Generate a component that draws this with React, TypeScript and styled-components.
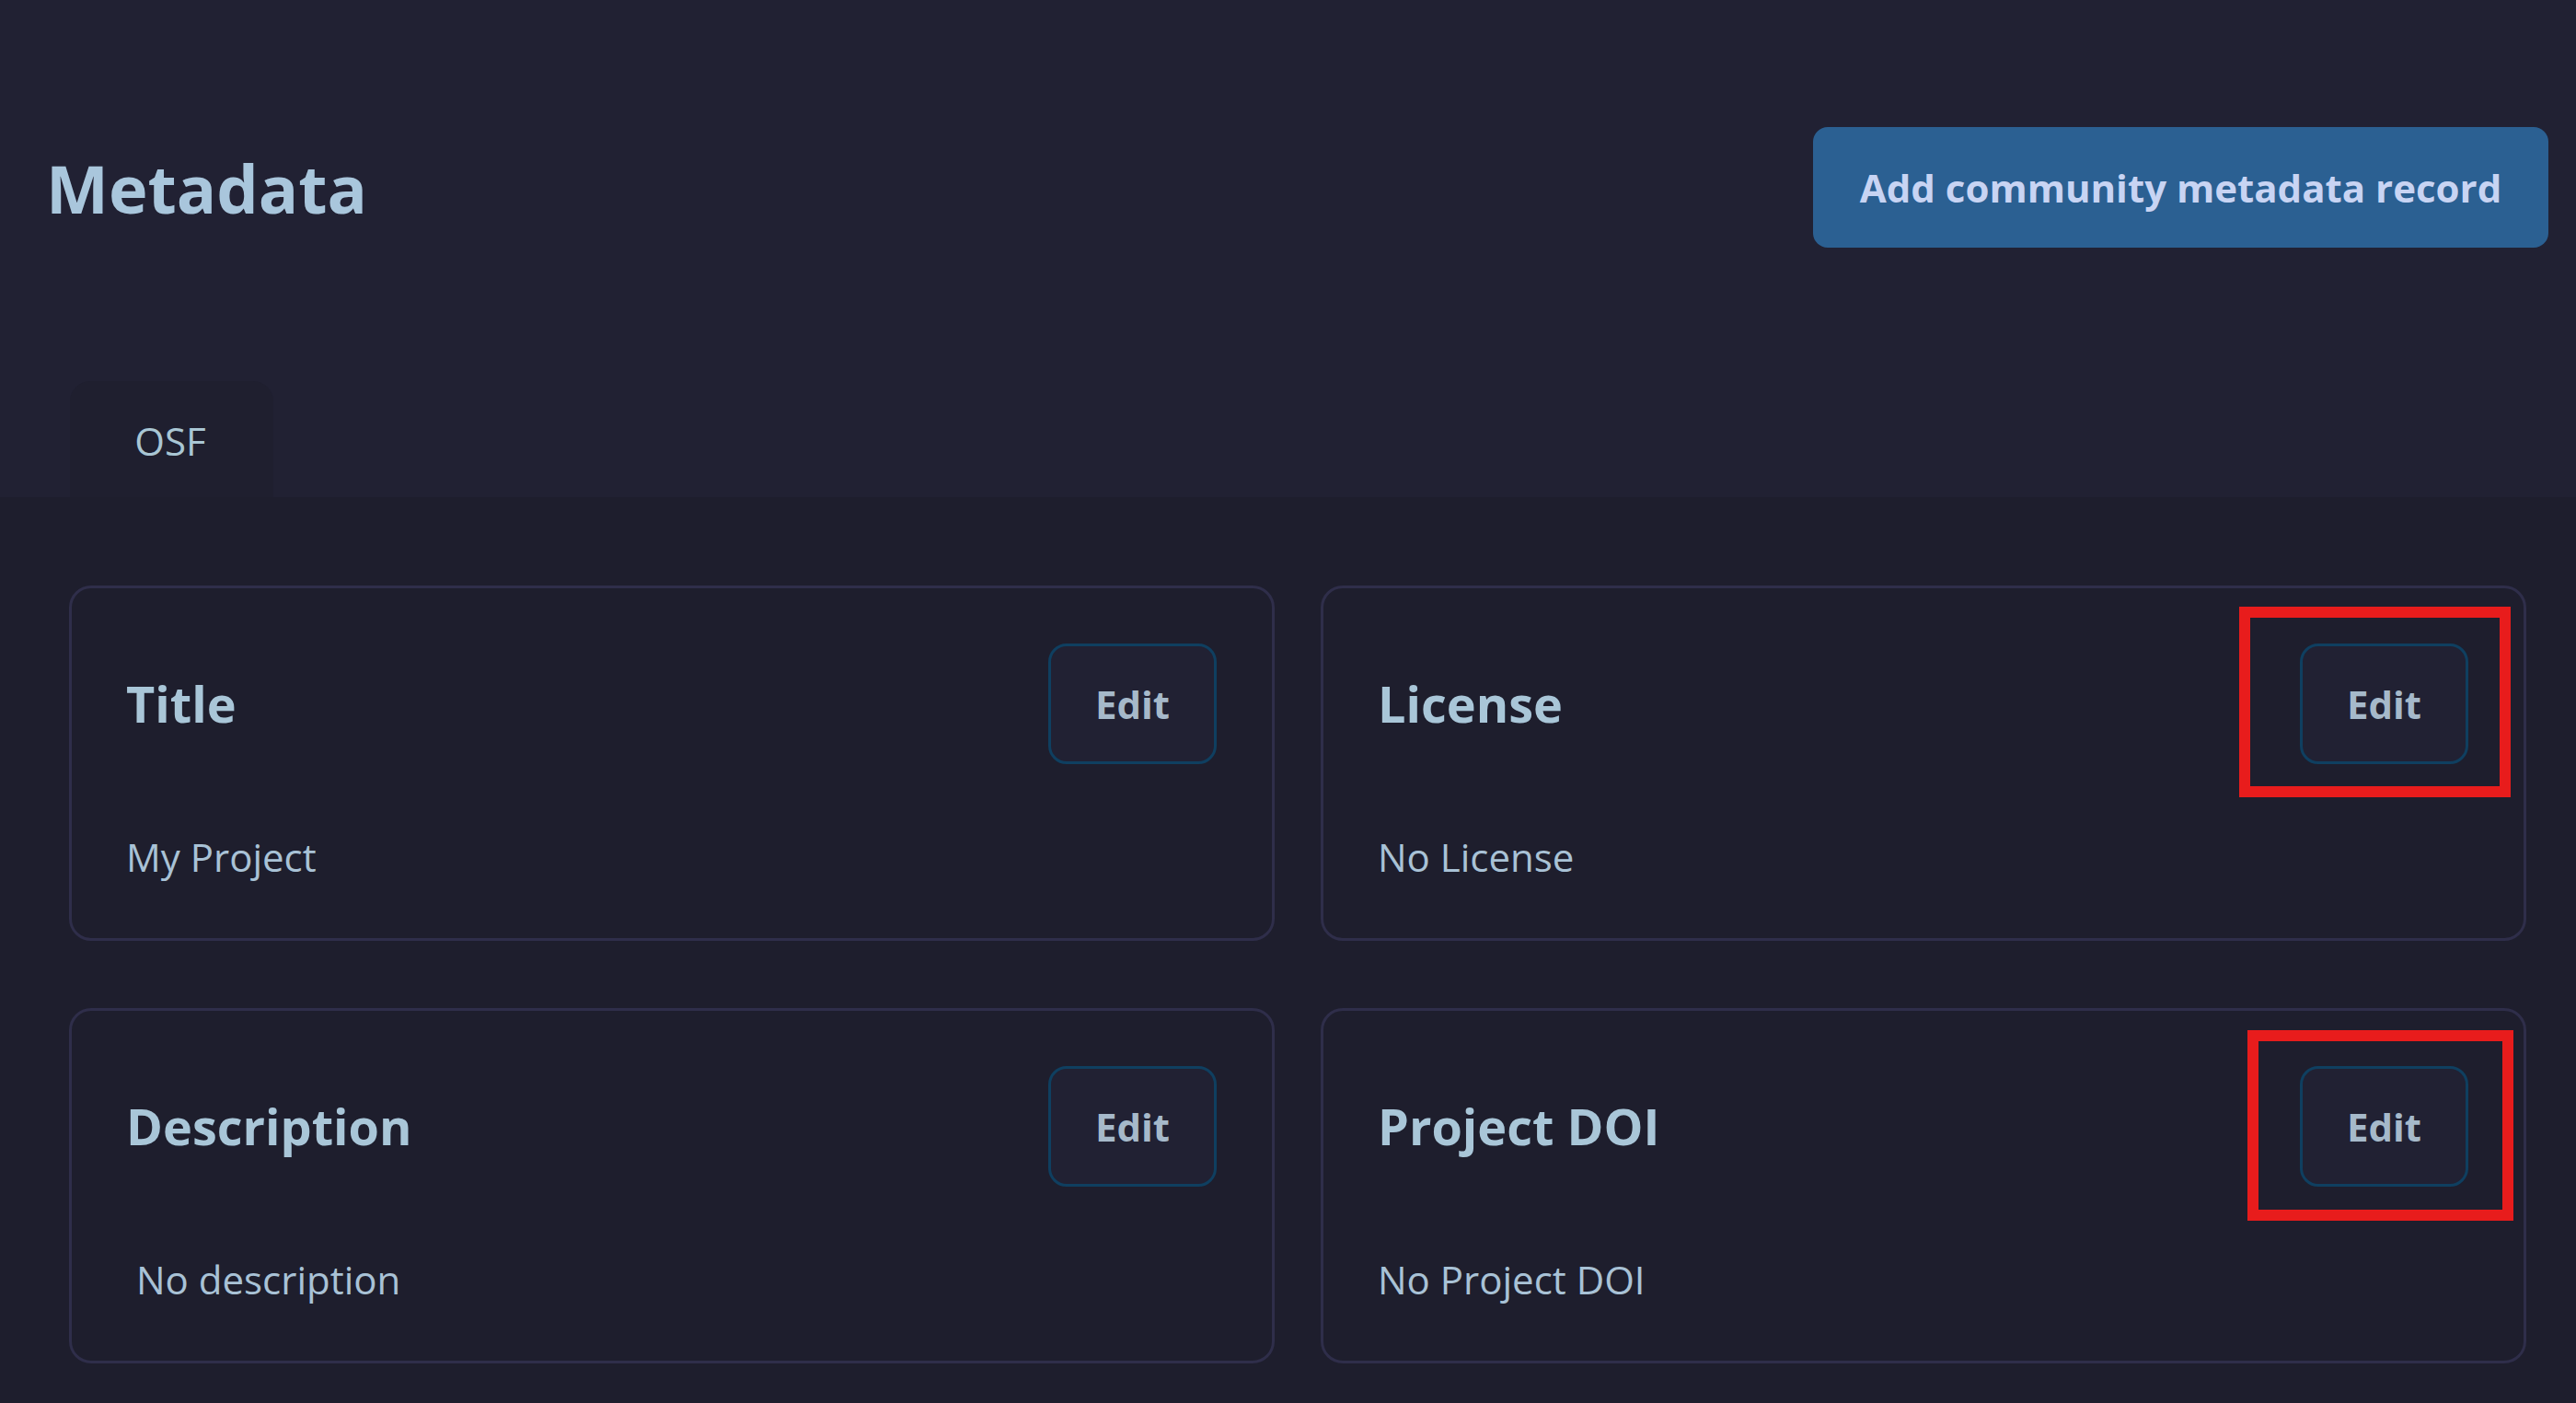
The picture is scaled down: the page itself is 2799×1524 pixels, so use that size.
import React from 'react';
import styled, { createGlobalStyle } from 'styled-components';

const GlobalStyle = createGlobalStyle`
  html, body {
    margin: 0;
    padding: 0;
    background: #1e1e2d;
    font-family: "Open Sans", "Noto Sans", sans-serif;
  }
  * {
    box-sizing: border-box;
  }
`

interface FieldCardProps {
  title: string
  value: string
  indented?: boolean
  mark?: { top: number, right: number, width: number, height: number }
}

const FieldCard = (props: FieldCardProps) => (
  <Card>
    <CardHead>
      <CardTitle>{props.title}</CardTitle>
      <EditButton>Edit</EditButton>
    </CardHead>
    <CardValue $indented={props.indented}>{props.value}</CardValue>
    {props.mark && (
      <Highlight
        $top={props.mark.top}
        $right={props.mark.right}
        $width={props.mark.width}
        $height={props.mark.height}
      />
    )}
  </Card>
)

export default function App() {
  return (
    <Page>
      <GlobalStyle />
      <Header>
        <TitleRow>
          <PageTitle>Metadata</PageTitle>
          <AddButton>Add community metadata record</AddButton>
        </TitleRow>
        <Tabs>
          <Tab>OSF</Tab>
        </Tabs>
      </Header>
      <Grid>
        <FieldCard title="Title" value="My Project" />
        <FieldCard
          title="License"
          value="No License"
          mark={{ top: 20, right: 14, width: 295, height: 207 }}
        />
        <FieldCard title="Description" value="No description" indented />
        <FieldCard
          title="Project DOI"
          value="No Project DOI"
          mark={{ top: 21, right: 11, width: 289, height: 207 }}
        />
      </Grid>
    </Page>
  );
}

const Page = styled.div`
  width: 2799px;
  height: 1524px;
  overflow: hidden;
  background: #1e1e2d;
`

const Header = styled.header`
  height: 540px;
  padding: 138px 30px 0 50px;
  background: #212133;
`

const TitleRow = styled.div`
  display: flex;
  align-items: center;
  justify-content: space-between;
`

const PageTitle = styled.h1`
  margin: 0;
  font-size: 72px;
  line-height: 96px;
  font-weight: 700;
  color: #a9c6dc;
`

const AddButton = styled.button`
  width: 799px;
  height: 131px;
  padding: 0;
  border: 0;
  border-radius: 16px;
  background: #2b6092;
  color: #c8d4f3;
  font-family: inherit;
  font-size: 42px;
  font-weight: 700;
`

const Tabs = styled.div`
  display: flex;
  margin: 145px 0 0 26px;
`

const Tab = styled.div`
  display: flex;
  align-items: center;
  justify-content: center;
  width: 221px;
  height: 126px;
  padding: 2px 3px 0 0;
  border-radius: 22px 22px 0 0;
  background: #1f1f2f;
  color: #a9c6d4;
  font-size: 42px;
`

const Grid = styled.main`
  display: grid;
  grid-template-columns: 1fr 1fr;
  gap: 73px 50px;
  padding: 96px 54px 0 75px;
`

const Card = styled.section`
  position: relative;
  height: 386px;
  padding: 60px 60px 60px 59px;
  border: 3px solid #2f2e4a;
  border-radius: 24px;
`

const CardHead = styled.div`
  display: flex;
  align-items: center;
  justify-content: space-between;
`

const CardTitle = styled.h2`
  margin: 0 0 2px;
  font-size: 54px;
  line-height: 70px;
  font-weight: 700;
  color: #a9c6d8;
`

const EditButton = styled.button`
  width: 183px;
  height: 131px;
  padding: 0;
  border: 3px solid #0f3f60;
  border-radius: 20px;
  background: #212133;
  color: #a6b9ca;
  font-family: inherit;
  font-size: 42px;
  font-weight: 700;
`

const CardValue = styled.p<{ $indented?: boolean }>`
  margin: 72px 0 0;
  padding-left: ${props => (props.$indented ? '11px' : '0')};
  font-size: 42px;
  line-height: 58px;
  color: #a9c2d6;
`

const Highlight = styled.div<{ $top: number, $right: number, $width: number, $height: number }>`
  position: absolute;
  top: ${props => props.$top}px;
  right: ${props => props.$right}px;
  width: ${props => props.$width}px;
  height: ${props => props.$height}px;
  border: 12px solid #e81c1c;
`
